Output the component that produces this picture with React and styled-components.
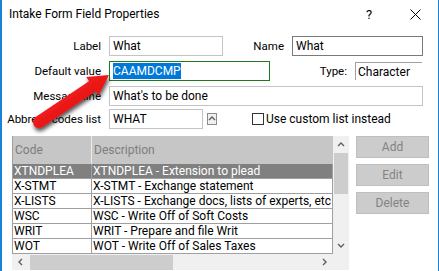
import React from "react";
import styled, { createGlobalStyle } from "styled-components";

const GlobalStyle = createGlobalStyle`
  html, body {
    margin: 0;
    padding: 0;
    background: #fff;
  }
`;

const Window = styled.div`
  position: relative;
  width: 439px;
  height: 271px;
  box-sizing: border-box;
  border-left: 2px solid #1883d7;
  border-right: 1px solid #1883d7;
  background: #fff;
  overflow: hidden;
  font-family: Roboto, "Noto Sans", sans-serif;
  font-size: 12px;
  color: #000;
`;

const TitleBar = styled.div`
  display: flex;
  align-items: center;
  height: 28px;
  padding-left: 7px;
`;

const Title = styled.div`
  flex: 1;
  font-size: 12px;
  color: #000;
`;

const TitleButton = styled.div`
  width: 46px;
  height: 28px;
  display: flex;
  align-items: center;
  justify-content: center;
  font-size: 13px;
  color: #000;
`;

const Form = styled.div`
  display: flex;
  flex-direction: column;
  padding-top: 8px;
`;

const Row = styled.div`
  display: flex;
  align-items: center;
  height: 20px;
  margin-top: ${(p) => p.$gap || 0}px;
`;

const FieldLabel = styled.div`
  width: ${(p) => p.$w}px;
  text-align: right;
  white-space: nowrap;
  padding-right: 8px;
  box-sizing: content-box;
  font-size: 11.5px;
`;

const Input = styled.div`
  width: ${(p) => p.$w}px;
  height: 20px;
  box-sizing: border-box;
  border: 1px solid ${(p) => p.$border || "#c4c4c4"};
  padding: 0 3px;
  display: flex;
  align-items: center;
  white-space: nowrap;
  overflow: hidden;
`;

const Selected = styled.span`
  background: #0078d7;
  color: #fff;
  padding: 1px 0;
`;

const TypeBox = styled.div`
  width: 67px;
  height: 18px;
  box-sizing: border-box;
  border-top: 1px solid #a0a0a0;
  border-left: 1px solid #a0a0a0;
  padding-left: 2px;
  display: flex;
  align-items: center;
`;

const SpinButton = styled.div`
  width: 10px;
  height: 12px;
  margin-left: 4px;
  box-sizing: border-box;
  border: 1px solid #8c8c8c;
  background: #f0f0f0;
  display: flex;
  align-items: center;
  justify-content: center;
`;

const CheckRow = styled.label`
  display: flex;
  align-items: center;
  margin-left: 35px;
  gap: 2px;
`;

const CheckBox = styled.span`
  width: 12px;
  height: 12px;
  box-sizing: border-box;
  border: 1px solid #333;
  background: #fff;
`;

const Bottom = styled.div`
  display: flex;
  align-items: flex-start;
  margin-top: 7px;
  padding-left: 10px;
`;

const GridPanel = styled.div`
  width: 337px;
  box-sizing: border-box;
  border-right: 1px solid #c8c8c8;
  display: grid;
  grid-template-columns: 321px 16px;
  grid-template-rows: 118px 16px;
`;

const Table = styled.div`
  display: flex;
  flex-direction: column;
  border-left: 1px solid #a0a0a0;
  overflow: hidden;
`;

const HeaderRow = styled.div`
  display: flex;
  height: 28px;
  background: #c6c6c6;
  color: #7d7d7d;
  flex-shrink: 0;
`;

const HeaderCell = styled.div`
  width: ${(p) => p.$w}px;
  flex-shrink: 0;
  display: flex;
  align-items: center;
  padding-left: 2px;
  box-sizing: border-box;
  border-right: 1px solid ${(p) => (p.$last ? "transparent" : "#ececec")};
`;

const DataRow = styled.div`
  display: flex;
  height: 15px;
  flex-shrink: 0;
  background: ${(p) => (p.$selected ? "#808080" : "#fff")};
  color: ${(p) => (p.$selected ? "#fff" : "#000")};
`;

const Cell = styled.div`
  width: ${(p) => p.$w}px;
  flex-shrink: 0;
  box-sizing: border-box;
  padding-left: 1px;
  border-right: 1px solid #a0a0a0;
  border-bottom: 1px solid #a0a0a0;
  line-height: 14px;
  white-space: nowrap;
  overflow: hidden;
`;

const VScroll = styled.div`
  background: #f0f0f0;
  display: flex;
  flex-direction: column;
`;

const HScroll = styled.div`
  background: #f0f0f0;
  display: flex;
  align-items: center;
`;

const ScrollArrow = styled.div`
  width: ${(p) => p.$w || 16}px;
  height: ${(p) => p.$h || 17}px;
  flex-shrink: 0;
  display: flex;
  align-items: center;
  justify-content: center;
`;

const VThumb = styled.div`
  height: 41px;
  margin: 0 1px;
  background: #cdcdcd;
`;

const HThumb = styled.div`
  width: 143px;
  height: 15px;
  margin-left: 1px;
  background: #cdcdcd;
`;

const Spacer = styled.div`
  flex: 1;
`;

const Corner = styled.div`
  background: #f0f0f0;
`;

const ButtonCol = styled.div`
  display: flex;
  flex-direction: column;
  gap: 6px;
  margin-left: 7px;
`;

const Button = styled.div`
  width: 73px;
  height: 22px;
  box-sizing: border-box;
  border: 1px solid #bfbfbf;
  background: #cccccc;
  color: #838383;
  display: flex;
  align-items: center;
  justify-content: center;
`;

const ArrowOverlay = styled.svg`
  position: absolute;
  left: -2px;
  top: 0;
  pointer-events: none;
`;

const Chevron = ({ dir }) => {
  const paths = {
    up: "M1 5 L4 2 L7 5",
    down: "M1 2 L4 5 L7 2",
    left: "M5 1 L2 4 L5 7",
    right: "M2 1 L5 4 L2 7",
  };
  return (
    <svg width="8" height="8" viewBox="0 0 8 8">
      <path d={paths[dir]} fill="none" stroke="#606060" strokeWidth="1.4" />
    </svg>
  );
};

const rows = [
  ["XTNDPLEA", "XTNDPLEA - Extension to plead"],
  ["X-STMT", "X-STMT - Exchange statement"],
  ["X-LISTS", "X-LISTS - Exchange docs, lists of experts, etc"],
  ["WSC", "WSC - Write Off of Soft Costs"],
  ["WRIT", "WRIT - Prepare and file Writ"],
  ["WOT", "WOT - Write Off of Sales Taxes"],
];

const RedArrow = () => (
  <ArrowOverlay width="439" height="271" viewBox="0 0 439 271">
    <defs>
      <filter id="shadow" x="-20%" y="-20%" width="140%" height="140%">
        <feGaussianBlur in="SourceAlpha" stdDeviation="2" />
        <feOffset dx="1" dy="3" result="b" />
        <feComponentTransfer>
          <feFuncA type="linear" slope="0.7" />
        </feComponentTransfer>
        <feMerge>
          <feMergeNode />
          <feMergeNode in="SourceGraphic" />
        </feMerge>
      </filter>
      <linearGradient id="red" x1="0" y1="0" x2="1" y2="1">
        <stop offset="0" stopColor="#ff3030" />
        <stop offset="1" stopColor="#d80000" />
      </linearGradient>
    </defs>
    <path
      filter="url(#shadow)"
      fill="url(#red)"
      d="M109 75 L98.5 95.3 L95.8 91.2 L42.4 127 A6 6 0 0 1 35.6 117 L89 81.2 L86.3 77.1 Z"
    />
  </ArrowOverlay>
);

export default function App() {
  return (
    <Window>
      <GlobalStyle />
      <TitleBar>
        <Title>Intake Form Field Properties</Title>
        <TitleButton>?</TitleButton>
        <TitleButton>
          <svg width="11" height="11" viewBox="0 0 11 11">
            <path d="M0.5 0.5 L10.5 10.5 M10.5 0.5 L0.5 10.5" stroke="#000" strokeWidth="1" />
          </svg>
        </TitleButton>
      </TitleBar>
      <Form>
        <Row>
          <FieldLabel $w={99}>Label</FieldLabel>
          <Input $w={114}>What</Input>
          <FieldLabel $w={61}>Name</FieldLabel>
          <Input $w={131} $border="#7a7a7a">What</Input>
        </Row>
        <Row $gap={5}>
          <FieldLabel $w={99}>Default value</FieldLabel>
          <Input $w={161} $border="#1e7b1e">
            <Selected>CAAMDCMP</Selected>
          </Input>
          <FieldLabel $w={77}>Type:</FieldLabel>
          <TypeBox>Character</TypeBox>
        </Row>
        <Row $gap={5}>
          <FieldLabel $w={99}>Message line</FieldLabel>
          <Input $w={314}>What's to be done</Input>
        </Row>
        <Row $gap={3}>
          <FieldLabel $w={99}>Abbrevs codes list</FieldLabel>
          <Input $w={94}>WHAT</Input>
          <SpinButton>
            <Chevron dir="up" />
          </SpinButton>
          <CheckRow>
            <CheckBox />
            Use custom list instead
          </CheckRow>
        </Row>
      </Form>
      <Bottom>
        <GridPanel>
          <Table>
            <HeaderRow>
              <HeaderCell $w={79}>Code</HeaderCell>
              <HeaderCell $w={241} $last>
                Description
              </HeaderCell>
            </HeaderRow>
            {rows.map(([code, desc], i) => (
              <DataRow key={code} $selected={i === 0}>
                <Cell $w={79}>{code}</Cell>
                <Cell $w={241}>{desc}</Cell>
              </DataRow>
            ))}
          </Table>
          <VScroll>
            <ScrollArrow>
              <Chevron dir="up" />
            </ScrollArrow>
            <VThumb />
            <Spacer />
            <ScrollArrow>
              <Chevron dir="down" />
            </ScrollArrow>
          </VScroll>
          <HScroll>
            <ScrollArrow $w={17} $h={16}>
              <Chevron dir="left" />
            </ScrollArrow>
            <HThumb />
            <Spacer />
            <ScrollArrow $w={17} $h={16}>
              <Chevron dir="right" />
            </ScrollArrow>
          </HScroll>
          <Corner />
        </GridPanel>
        <ButtonCol>
          <Button>Add</Button>
          <Button>Edit</Button>
          <Button>Delete</Button>
        </ButtonCol>
      </Bottom>
      <RedArrow />
    </Window>
  );
}
